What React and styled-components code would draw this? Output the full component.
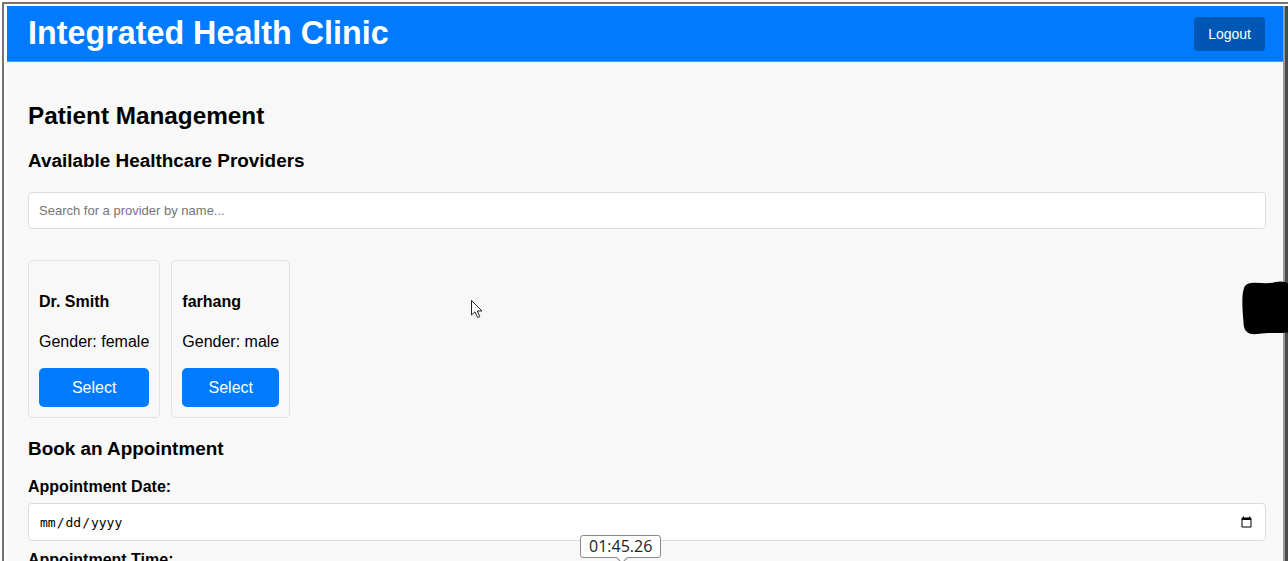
import React from 'react'
import styled, { createGlobalStyle } from 'styled-components'

const GlobalStyle = createGlobalStyle`
    html, body {
        margin: 0;
        padding: 0;
        background: #ffffff;
        overflow: hidden;
    }
    body {
        font-family: "Liberation Sans", Arial, sans-serif;
        color: #000;
    }
`;

const Window = styled.div`
    position: relative;
    margin: 2px 0 0 2px;
    height: 559px;
    border-top: 2px solid #737373;
    border-left: 2px solid #737373;
    padding: 2px 0 0 3px;
    box-sizing: border-box;
    display: flex;
    overflow: hidden;
`;

const App = styled.div`
    flex: 1;
    background: #f8f8f8;
    display: flex;
    flex-direction: column;
`;

const Edge = styled.div`
    width: 2px;
    background: #9a9a9a;
    border-right: 3px solid #4a4a4a;
`;

const Header = styled.header`
    flex-shrink: 0;
    background-color: #007bff;
    height: 56px;
    padding: 0 18px 0 21px;
    display: flex;
    align-items: center;
    justify-content: space-between;
    box-sizing: border-box;
    border-bottom: 1px solid #3d9bff;
`;

const Title = styled.h1`
    margin: 0;
    color: #fff;
    font-size: 32.3px;
    font-weight: bold;
`;

const LogoutButton = styled.button`
    background-color: #0056b3;
    color: #fff;
    border: none;
    border-radius: 4px;
    padding: 9px 14px;
    font-family: "Liberation Sans", Arial, sans-serif;
    font-size: 14px;
    cursor: pointer;
`;

const Main = styled.main`
    flex-shrink: 0;
    padding: 20px 17px 0 21px;
`;

const PageTitle = styled.h2`
    font-size: 24.3px;
    margin: 20px 0;
`;

const SectionTitle = styled.h3`
    font-size: 18.9px;
    margin: 18px 0;
`;

const SearchInput = styled.input`
    display: block;
    width: 100%;
    box-sizing: border-box;
    margin: 20px 0 31px;
    padding: 10px;
    height: 37px;
    border: 1px solid #dcdcdc;
    border-radius: 4px;
    background: #fff;
    font-family: "Liberation Sans", Arial, sans-serif;
    font-size: 13px;
    &::placeholder {
        color: #757575;
    }
`;

const CardRow = styled.div`
    display: flex;
    gap: 11px;
    margin-bottom: 20px;
`;

const Card = styled.div`
    border: 1px solid #e2e2e2;
    border-radius: 5px;
    background: #f8f8f8;
    padding: 10px;
    display: flex;
    flex-direction: column;
    align-items: flex-start;
`;

const CardName = styled.h4`
    font-size: 16px;
    margin: 22px 0 0;
`;

const CardText = styled.p`
    font-size: 16px;
    margin: 22px 0 17px;
`;

const SelectButton = styled.button`
    align-self: stretch;
    background-color: #007bff;
    color: #fff;
    border: none;
    border-radius: 5px;
    height: 39px;
    padding: 0 20px;
    font-family: "Liberation Sans", Arial, sans-serif;
    font-size: 16px;
    cursor: pointer;
`;

const Label = styled.label`
    display: block;
    font-size: 16px;
    font-weight: bold;
    margin: 1px 0 7px;
`;

const DateInput = styled.input`
    display: block;
    width: 100%;
    box-sizing: border-box;
    height: 38px;
    padding: 0 10px;
    margin-bottom: 10px;
    border: 1px solid #dcdcdc;
    border-radius: 4px;
    background: #fff;
    font-family: "DejaVu Sans Mono", monospace;
    font-size: 13px;
    color: #000;
`;

const Timestamp = styled.div`
    position: absolute;
    left: 576px;
    top: 531px;
    padding: 1px 8px;
    border: 1px solid #8a8a8a;
    border-radius: 3px;
    background: #fff;
    font-family: "Open Sans", "Noto Sans", sans-serif;
    font-size: 16px;
    color: #222;
    line-height: 19px;
    &::after {
        content: "";
        position: absolute;
        left: 37px;
        bottom: -5px;
        width: 7px;
        height: 7px;
        background: #fff;
        border-right: 1px solid #8a8a8a;
        border-bottom: 1px solid #8a8a8a;
        transform: rotate(45deg);
    }
`;

const Blob = styled.svg`
    position: absolute;
    left: 1230px;
    top: 272px;
`;

const Cursor = styled.svg`
    position: absolute;
    left: 466px;
    top: 295px;
`;

const providers = [
    { name: 'Dr. Smith', gender: 'female' },
    { name: 'farhang', gender: 'male' },
];

export default function AppPage() {
    return (
        <>
            <GlobalStyle />
            <Window>
                <App>
                    <Header>
                        <Title>Integrated Health Clinic</Title>
                        <LogoutButton>Logout</LogoutButton>
                    </Header>
                    <Main>
                        <PageTitle>Patient Management</PageTitle>
                        <SectionTitle>Available Healthcare Providers</SectionTitle>
                        <SearchInput placeholder="Search for a provider by name..." />
                        <CardRow>
                            {providers.map((p) => (
                                <Card key={p.name}>
                                    <CardName>{p.name}</CardName>
                                    <CardText>Gender: {p.gender}</CardText>
                                    <SelectButton>Select</SelectButton>
                                </Card>
                            ))}
                        </CardRow>
                        <SectionTitle>Book an Appointment</SectionTitle>
                        <Label>Appointment Date:</Label>
                        <DateInput type="date" />
                        <Label>Appointment Time:</Label>
                    </Main>
                </App>
                <Edge />
                <Blob width="58" height="60" viewBox="0 0 55 60">
                    <path d="M12 8 C20 5 30 9 40 6 C50 4 55 8 55 12 L55 56 C45 58 35 56 22 58 C12 59 8 55 8 46 C7 36 6 20 8 14 C9 10 10 9 12 8 Z" fill="#000" />
                </Blob>
                <Cursor width="14" height="22" viewBox="0 0 14 22">
                    <path d="M1.5 1.5 L1.5 16 L5 12.8 L7.6 18.6 L9.8 17.6 L7.3 12 L12 12 Z" fill="#fff" stroke="#222" strokeWidth="1" strokeLinejoin="round" />
                </Cursor>
                <Timestamp>01:45.26</Timestamp>
            </Window>
        </>
    )
}
